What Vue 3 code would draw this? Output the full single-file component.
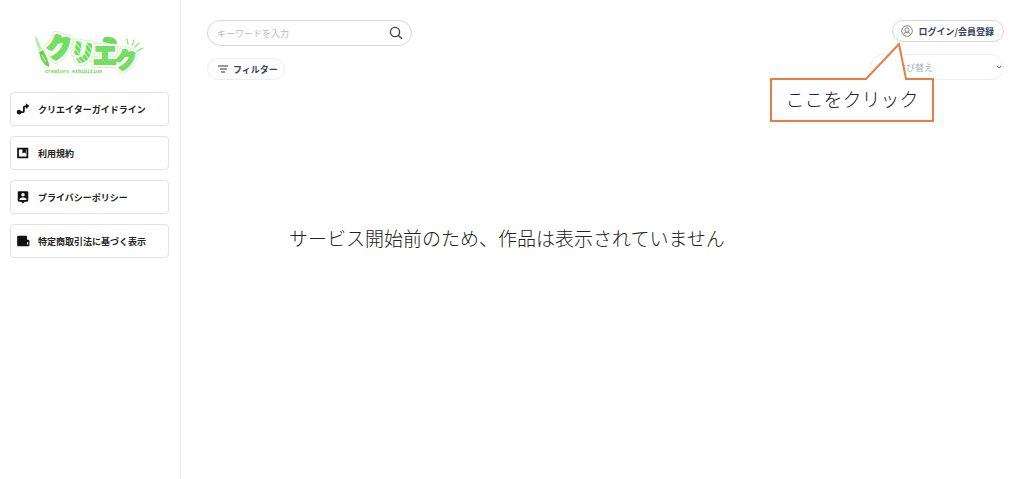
<template>
  <div class="page">
    <aside class="sidebar">
      <a class="logo" href="#" aria-label="クリエク">
        <svg width="120" height="60" viewBox="-4 -6 120 60">
          <defs>
            <pattern id="dots" width="4" height="4" patternUnits="userSpaceOnUse">
              <rect width="4" height="4" fill="#6edb5b" />
              <circle cx="1" cy="1" r="0.6" fill="#b5f0a6" />
              <circle cx="3" cy="3" r="0.6" fill="#b5f0a6" />
            </pattern>
            <pattern id="stripes" width="4" height="4" patternUnits="userSpaceOnUse" patternTransform="rotate(40)">
              <rect width="4" height="4" fill="#6edb5b" />
              <rect width="4" height="1" fill="#d2f7c9" />
            </pattern>
          </defs>
          <g class="halo">
            <text v-for="l in letters" :key="l.id" :x="l.x" :y="l.y" :font-size="l.size" :transform="l.turn">{{ l.char }}</text>
          </g>
          <g class="rim">
            <text v-for="l in letters" :key="l.id" :x="l.x" :y="l.y" :font-size="l.size" :transform="l.turn">{{ l.char }}</text>
          </g>
          <g class="letters">
            <text v-for="l in letters" :key="l.id" :x="l.x" :y="l.y" :font-size="l.size" :transform="l.turn" :fill="l.fill" :stroke="l.fill">{{ l.char }}</text>
          </g>
          <path d="M69 11c-1-4 2-6 6-5 5 0 8 3 8 7-5 0-9-1-14-2z" fill="#6edb5b" />
          <path d="M1 5c2 0 3 4 7 13l-3 2C3 14 1 9 1 5z" fill="#b5f0a6" />
          <path d="M5 21l4-2 4 8 2 6v3l-4-2-4-6z" fill="#62d44e" />
          <path d="M8 24l4 7" stroke="#d9f8d2" stroke-width="1" />
          <path d="M93 8l1 5M100 9l-2 5M105 12l-4 4M109 17l-6 3" stroke="#8be57b" stroke-width="1.3" stroke-linecap="round" />
          <text class="tagline" x="11" y="42">creators exhibition</text>
        </svg>
      </a>
      <nav class="menu">
        <a v-for="item in menu" :key="item.text" class="menu-item" href="#">
          <svg width="14" height="14" viewBox="0 0 24 24">
            <path :d="item.icon" fill="#111" fill-rule="evenodd" />
          </svg>
          <span>{{ item.text }}</span>
        </a>
      </nav>
    </aside>

    <main class="main">
      <header class="bar">
        <div class="tools">
          <form class="search" @submit.prevent>
            <input v-model="keyword" type="text" aria-label="キーワード" placeholder="キーワードを入力" />
            <button type="submit" aria-label="検索">
              <svg width="14" height="14" viewBox="0 0 14 14" fill="none" stroke="#444" stroke-width="1.4" stroke-linecap="round">
                <circle cx="6" cy="6" r="4.6" />
                <path d="M9.4 9.4l3.2 3.2" />
              </svg>
            </button>
          </form>
          <button class="filter" type="button">
            <svg width="12" height="8" viewBox="0 0 12 8" stroke="#777" stroke-width="1.3">
              <path d="M1 1h10M3 4h7M4 7h4" />
            </svg>
            フィルター
          </button>
        </div>

        <div class="account">
          <button class="login" type="button">
            <svg width="12" height="12" viewBox="0 0 12 12" fill="none" stroke="#777" stroke-width="0.9">
              <circle cx="6" cy="6" r="5.3" />
              <circle cx="6" cy="5" r="2.1" />
              <path d="M2.6 9.8C3 7.9 4.3 7.4 6 7.4s3 .5 3.4 2.4" />
            </svg>
            ログイン/会員登録
          </button>
          <div class="sort">
            <select v-model="sort" aria-label="並び替え">
              <option value="">並び替え</option>
            </select>
            <svg width="6" height="4" viewBox="0 0 6 4" fill="none" stroke="#777">
              <path d="M.7.7L3 3 5.3.7" />
            </svg>
          </div>
          <div class="callout">
            <svg width="166" height="82" viewBox="0 0 166 82">
              <path d="M130 3L97 38H2v42h162V38h-27z" fill="#fff" stroke="#e97c43" stroke-width="2" />
            </svg>
            <span>ここをクリック</span>
          </div>
        </div>
      </header>

      <p class="message">サービス開始前のため、作品は表示されていません</p>
    </main>
  </div>
</template>

<script setup>
import { ref } from 'vue'

const keyword = ref('')
const sort = ref('')

const letters = [
  { id: 1, char: 'ク', x: 12, y: 26, size: 27, turn: 'rotate(-8 27 16)', fill: 'url(#dots)' },
  { id: 2, char: 'リ', x: 37, y: 30, size: 23, turn: 'rotate(10 48 22)', fill: 'url(#stripes)' },
  { id: 3, char: 'エ', x: 59, y: 33, size: 24, turn: 'rotate(0)', fill: 'url(#dots)' },
  { id: 4, char: 'ク', x: 81, y: 37, size: 22, turn: 'rotate(-6 91 28)', fill: 'url(#dots)' },
]

const menu = [
  {
    text: 'クリエイターガイドライン',
    icon: 'M17 2l6 5-6 5V9h-2v7a3 3 0 0 1-3 3H9a4 4 0 1 1 0-3h3V9a3 3 0 0 1 3-3h2z',
  },
  {
    text: '利用規約',
    icon: 'M2 3h19v18H2zM5 6v12h13V6h-1v7l-3-2-3 2V6z',
  },
  {
    text: 'プライバシーポリシー',
    icon: 'M5 2h14a2 2 0 0 1 2 2v14a2 2 0 0 1-2 2h-4l-3 3-3-3H5a2 2 0 0 1-2-2V4a2 2 0 0 1 2-2zM12 5a3 3 0 1 0 0 6 3 3 0 0 0 0-6zM6 17h12v-1c0-2-4-3-6-3s-6 1-6 3z',
  },
  {
    text: '特定商取引法に基づく表示',
    icon: 'M4 3h13a2 2 0 0 1 2 2v5h2a2 2 0 0 1 2 2v7a2 2 0 0 1-2 2H4a2 2 0 0 1-2-2V5a2 2 0 0 1 2-2zM19 14v4h2v-4z',
  },
]
</script>

<style>
body {
  margin: 0;
  background: #fff;
}
</style>

<style scoped>
.page {
  display: flex;
  min-height: 100vh;
  font-family: "Noto Sans CJK JP", "Noto Sans", sans-serif;
  font-size: 9px;
  color: #222;
}
.sidebar {
  box-sizing: border-box;
  flex: 0 0 181px;
  padding: 25px 11px 20px 10px;
  border-right: 1px solid #eee;
}
.logo {
  display: flex;
  justify-content: center;
  margin-bottom: 7px;
}
.logo svg {
  overflow: visible;
}
.logo text {
  font-weight: 900;
}
.halo text {
  fill: #d2f5ca;
  stroke: #d2f5ca;
  stroke-width: 8px;
  stroke-linejoin: round;
}
.rim text {
  fill: #fff;
  stroke: #fff;
  stroke-width: 6px;
  stroke-linejoin: round;
}
.letters text {
  stroke-width: 2px;
  stroke-linejoin: round;
}
.logo .tagline {
  font-family: "Liberation Mono", monospace;
  font-size: 5px;
  font-weight: bold;
  fill: #62d44e;
}
.menu {
  display: flex;
  flex-direction: column;
  gap: 10px;
}
.menu-item {
  display: flex;
  align-items: center;
  gap: 8px;
  box-sizing: border-box;
  height: 34px;
  padding: 0 5px;
  border: 1px solid #e3e3e3;
  border-radius: 4px;
  color: #222;
  font-weight: 700;
  text-decoration: none;
}
.main {
  flex: 1;
  min-width: 0;
  padding: 20px 20px 20px 26px;
}
.bar {
  display: flex;
  justify-content: space-between;
  align-items: flex-start;
}
.tools,
.account {
  display: flex;
  flex-direction: column;
}
.tools {
  align-items: flex-start;
  gap: 12px;
}
.account {
  position: relative;
  align-items: flex-end;
  gap: 12px;
}
button,
input,
select {
  box-sizing: border-box;
  margin: 0;
  font: inherit;
}
button {
  cursor: pointer;
}
.search {
  display: flex;
  align-items: center;
  box-sizing: border-box;
  width: 205px;
  height: 26px;
  padding: 0 8px 0 9px;
  border: 1px solid #d8d8d8;
  border-radius: 13px;
}
.search input {
  flex: 1;
  min-width: 0;
  padding: 0;
  border: none;
  outline: none;
  background: none;
}
.search input::placeholder {
  color: #bbb;
}
.search button {
  display: flex;
  padding: 0;
  border: none;
  background: none;
}
.filter,
.login {
  display: flex;
  align-items: center;
  height: 22px;
  border-radius: 11px;
  background: #fff;
  color: #3a4268;
}
.filter {
  gap: 4px;
  padding: 0 6px 0 9px;
  border: 1px solid #eee;
  font-weight: 700;
}
.login {
  gap: 6px;
  padding: 0 9px 0 8px;
  border: 1px solid #d8d8d8;
  font-weight: 700;
}
.sort {
  display: flex;
  align-items: center;
}
.sort select {
  width: 134px;
  height: 26px;
  padding: 0 20px 0 26px;
  border: 1px solid #eee;
  border-radius: 13px;
  background: #fff;
  color: #a9adbb;
  appearance: none;
}
.sort svg {
  margin-left: -8px;
  margin-right: 2px;
  pointer-events: none;
}
.callout {
  position: absolute;
  top: 21px;
  right: 69px;
  width: 166px;
  height: 82px;
}
.callout svg {
  display: block;
}
.callout span {
  position: absolute;
  left: 0;
  right: 0;
  bottom: 10px;
  text-align: center;
  font-size: 19px;
  font-weight: 300;
  line-height: 28px;
}
.message {
  margin: 144px 0 0 82px;
  font-size: 19px;
  font-weight: 300;
  line-height: 28px;
}
</style>
